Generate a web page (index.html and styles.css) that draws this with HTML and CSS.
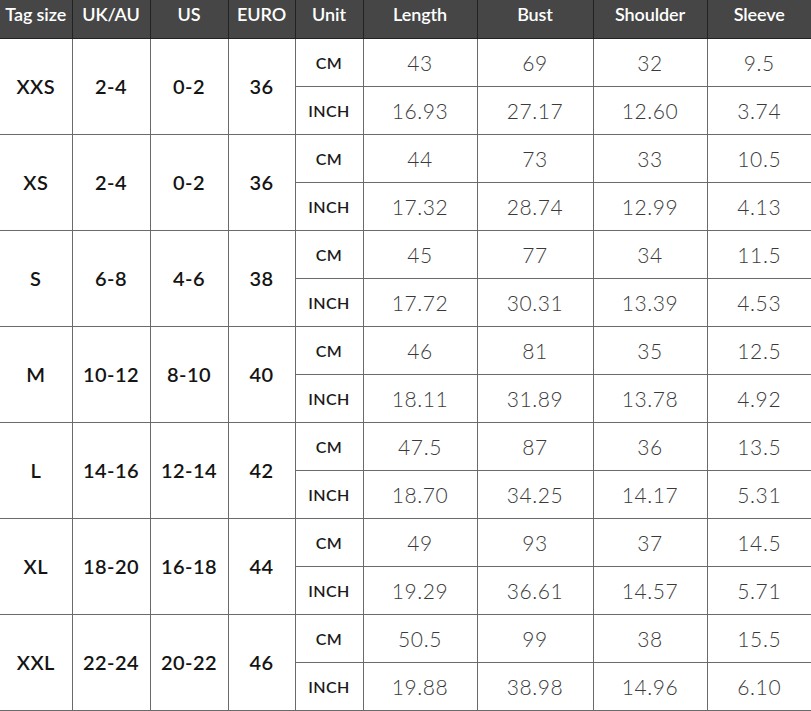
FILE: index.html
```html
<!DOCTYPE html>
<html>
<head>
<meta charset="utf-8">
<link rel="stylesheet" href="styles.css">
</head>
<body>
<table class="chart">
  <colgroup>
    <col class="c-tag"><col class="c-uk"><col class="c-us"><col class="c-eu"><col class="c-unit">
    <col class="c-len"><col class="c-bust"><col class="c-sh"><col class="c-sl">
  </colgroup>
  <thead>
    <tr class="head">
      <th>Tag size</th><th>UK/AU</th><th>US</th><th>EURO</th><th>Unit</th><th>Length</th><th>Bust</th><th>Shoulder</th><th>Sleeve</th>
    </tr>
  </thead>
  <tbody>
    <tr><td class="lab" rowspan="2">XXS</td><td class="lab" rowspan="2">2-4</td><td class="lab" rowspan="2">0-2</td><td class="lab" rowspan="2">36</td><td class="unit">CM</td><td class="val">43</td><td class="val">69</td><td class="val">32</td><td class="val">9.5</td></tr>
    <tr><td class="unit">INCH</td><td class="val">16.93</td><td class="val">27.17</td><td class="val">12.60</td><td class="val">3.74</td></tr>
    <tr><td class="lab" rowspan="2">XS</td><td class="lab" rowspan="2">2-4</td><td class="lab" rowspan="2">0-2</td><td class="lab" rowspan="2">36</td><td class="unit">CM</td><td class="val">44</td><td class="val">73</td><td class="val">33</td><td class="val">10.5</td></tr>
    <tr><td class="unit">INCH</td><td class="val">17.32</td><td class="val">28.74</td><td class="val">12.99</td><td class="val">4.13</td></tr>
    <tr><td class="lab" rowspan="2">S</td><td class="lab" rowspan="2">6-8</td><td class="lab" rowspan="2">4-6</td><td class="lab" rowspan="2">38</td><td class="unit">CM</td><td class="val">45</td><td class="val">77</td><td class="val">34</td><td class="val">11.5</td></tr>
    <tr><td class="unit">INCH</td><td class="val">17.72</td><td class="val">30.31</td><td class="val">13.39</td><td class="val">4.53</td></tr>
    <tr><td class="lab" rowspan="2">M</td><td class="lab" rowspan="2">10-12</td><td class="lab" rowspan="2">8-10</td><td class="lab" rowspan="2">40</td><td class="unit">CM</td><td class="val">46</td><td class="val">81</td><td class="val">35</td><td class="val">12.5</td></tr>
    <tr><td class="unit">INCH</td><td class="val">18.11</td><td class="val">31.89</td><td class="val">13.78</td><td class="val">4.92</td></tr>
    <tr><td class="lab" rowspan="2">L</td><td class="lab" rowspan="2">14-16</td><td class="lab" rowspan="2">12-14</td><td class="lab" rowspan="2">42</td><td class="unit">CM</td><td class="val">47.5</td><td class="val">87</td><td class="val">36</td><td class="val">13.5</td></tr>
    <tr><td class="unit">INCH</td><td class="val">18.70</td><td class="val">34.25</td><td class="val">14.17</td><td class="val">5.31</td></tr>
    <tr><td class="lab" rowspan="2">XL</td><td class="lab" rowspan="2">18-20</td><td class="lab" rowspan="2">16-18</td><td class="lab" rowspan="2">44</td><td class="unit">CM</td><td class="val">49</td><td class="val">93</td><td class="val">37</td><td class="val">14.5</td></tr>
    <tr><td class="unit">INCH</td><td class="val">19.29</td><td class="val">36.61</td><td class="val">14.57</td><td class="val">5.71</td></tr>
    <tr><td class="lab" rowspan="2">XXL</td><td class="lab" rowspan="2">22-24</td><td class="lab" rowspan="2">20-22</td><td class="lab" rowspan="2">46</td><td class="unit">CM</td><td class="val">50.5</td><td class="val">99</td><td class="val">38</td><td class="val">15.5</td></tr>
    <tr><td class="unit">INCH</td><td class="val">19.88</td><td class="val">38.98</td><td class="val">14.96</td><td class="val">6.10</td></tr>
  </tbody>
</table>
</body>
</html>
```

FILE: styles.css
```css
html, body {
  margin: 0;
  padding: 0;
  background: #ffffff;
}

body {
  font-family: Lato, "Noto Sans", sans-serif;
  overflow: hidden;
}

.chart {
  width: 811px;
  border-collapse: collapse;
  table-layout: fixed;
  margin: 0;
}

.c-tag { width: 72px; }
.c-uk { width: 78px; }
.c-us { width: 78px; }
.c-eu { width: 67px; }
.c-unit { width: 68px; }
.c-len { width: 114px; }
.c-bust { width: 116px; }
.c-sh { width: 114px; }
.c-sl { width: 104px; }

.chart th,
.chart td {
  padding: 0;
  text-align: center;
  vertical-align: middle;
  border: 1px solid #6a6a6a;
}

.chart tr > :first-child { border-left: none; }
.chart tr > :last-child { border-right: none; }
.chart .head th { border-top: none; }

.head th {
  height: 38px;
  box-sizing: border-box;
  padding: 0 0 9px;
  background: #464646;
  color: #ffffff;
  font-weight: 600;
  font-size: 18px;
  line-height: 22px;
  border-color: #222222;
  letter-spacing: -0.1px;
}

.chart tbody td {
  height: 47px;
}

.lab {
  color: #141414;
  font-weight: 600;
  font-size: 20px;
  letter-spacing: 0.4px;
}

.unit {
  color: #1a1a1a;
  font-weight: 600;
  font-size: 16px;
  letter-spacing: 0.4px;
}

.val {
  color: #3a3a3a;
  font-weight: 300;
  font-size: 21px;
  letter-spacing: 0.6px;
}
```
